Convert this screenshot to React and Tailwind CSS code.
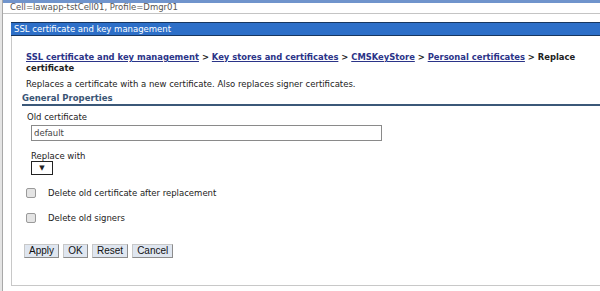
import React from "react";

export default function App() {
  const link = "text-[#2b3488] underline";
  return (
    <div className="w-[600px] h-[291px] bg-white overflow-hidden flex font-['DejaVu_Sans',Verdana,sans-serif]">
      <div className="w-[3px] h-full bg-[#e4e4e4] border-r border-[#a8a8a8] shrink-0" />
      <div className="flex-1 flex flex-col">
        <div className="h-[3px] bg-[#7094cc]" />
        <div className="h-[10px] pl-[7px] text-[8.5px] leading-[8px] text-[#555] overflow-hidden">
          Cell=lawapp-tstCell01, Profile=Dmgr01
        </div>
        <div className="h-[1px] bg-[#c4c4c4]" />
        <div className="h-[8px]" />
        <div className="ml-[8px] flex flex-col">
          <div className="h-[14px] bg-[#2d6fc8] border-t border-b border-[#17365f] text-white text-[8.5px] leading-[12px] pl-[3px]">
            SSL certificate and key management
          </div>
          <div className="border-l border-b border-[#c8c8c8] h-[250px] pl-[10px] pt-[16px] text-[8.5px] text-[#222]">
            <div className="font-bold text-[8.4px] leading-[11px] pl-[4px]">
              <span className={link}>SSL certificate and key management</span> &gt;{" "}
              <span className={link}>Key stores and certificates</span> &gt;{" "}
              <span className={link}>CMSKeyStore</span> &gt;{" "}
              <span className={link}>Personal certificates</span> &gt; Replace
              <br />
              certificate
            </div>
            <div className="mt-[5px] leading-[10px] pl-[4px]">
              Replaces a certificate with a new certificate. Also replaces signer certificates.
            </div>
            <div className="mt-[4px] font-bold text-[#3a5575] leading-[10px] border-b-2 border-[#3b5878] pb-[1px]">
              General Properties
            </div>
            <div className="mt-[6px] leading-[10px] pl-[5px]">Old certificate</div>
            <div className="mt-[3px] ml-[9px] w-[351px] h-[16px] border border-[#8a8a8a] leading-[14px] pl-[2px] text-[#444]">
              default
            </div>
            <div className="mt-[10px] leading-[10px] pl-[9px]">Replace with</div>
            <div className="ml-[9px] w-[22px] h-[14px] border border-[#222] flex items-center justify-center text-[7px]">
              ▼
            </div>
            <div className="mt-[13px] ml-[4px] flex items-center">
              <div className="w-[10px] h-[10px] border border-[#9a9a9a] bg-[#e4e4e4] rounded-[2px]" />
              <span className="ml-[12px] leading-[10px]">Delete old certificate after replacement</span>
            </div>
            <div className="mt-[15px] ml-[4px] flex items-center">
              <div className="w-[10px] h-[10px] border border-[#9a9a9a] bg-[#e4e4e4] rounded-[2px]" />
              <span className="ml-[12px] leading-[10px]">Delete old signers</span>
            </div>
            <div className="mt-[21px] ml-[2px] flex gap-[4px] font-['Liberation_Sans',Arial,sans-serif] text-[10px] text-[#111]">
              {["Apply", "OK", "Reset", "Cancel"].map((b) => (
                <div
                  key={b}
                  className="h-[14px] px-[4px] min-w-[25px] text-center bg-[#dfe6f0] border border-[#8c8c8c] border-t-[#c8c8c8] border-l-[#c8c8c8] leading-[12px]"
                >
                  {b}
                </div>
              ))}
            </div>
          </div>
        </div>
      </div>
    </div>
  );
}
